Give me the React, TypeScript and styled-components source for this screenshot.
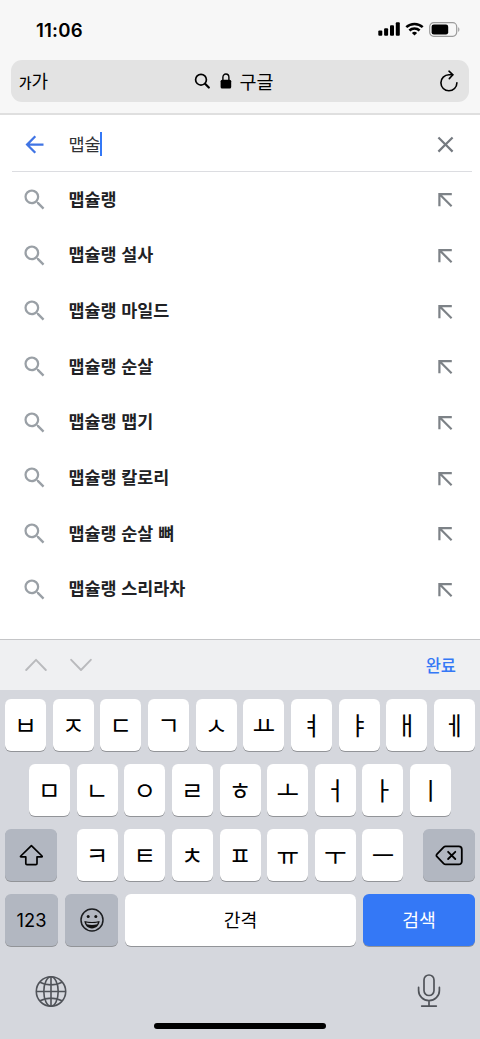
import React from 'react';
import styled, { createGlobalStyle } from 'styled-components';

const GlobalStyle = createGlobalStyle`
  * { box-sizing: border-box; }
  body { margin: 0; background: #fff; }
`;

const Screen = styled.div`
  width: 480px;
  height: 1039px;
  display: flex;
  flex-direction: column;
  overflow: hidden;
  background: #fff;
  color: #000;
  font-family: Inter, 'Noto Sans CJK KR', sans-serif;
  svg { display: block; flex: none; }
`;

const BrowserTop = styled.header`
  height: 115px;
  flex: none;
  background: #f7f7f7;
  border-bottom: 2px solid #dfdfdf;
  padding: 0 11px;
`;

const StatusBar = styled.div`
  height: 60px;
  padding: 0 8px 2px 25px;
  display: flex;
  align-items: center;
  justify-content: space-between;
`;

const Clock = styled.span`
  padding-top: 2px;
  font-size: 18.6px;
  font-weight: 600;
  letter-spacing: 0.2px;
  line-height: 20px;
`;

const StatusIcons = styled.div`
  display: flex;
  align-items: center;
  gap: 5px;
`;

const AddressBar = styled.div`
  height: 42px;
  border-radius: 11px;
  background: #e3e3e3;
  display: grid;
  grid-template-columns: 1fr auto 1fr;
  align-items: center;
  padding: 0 10px 0 8px;
  font-family: 'Noto Sans CJK KR', sans-serif;
`;

const TextSize = styled.div`
  display: flex;
  align-items: baseline;
  line-height: 24px;
  font-size: 18px;
`;

const SmallGlyph = styled.span`
  font-size: 13.5px;
  font-weight: 500;
`;

const Site = styled.div`
  display: flex;
  align-items: center;
  gap: 10px;
  padding-right: 10px;
  font-size: 18.5px;
  line-height: 24px;
`;

const SiteName = styled.span`
  margin-left: -3px;
`;

const Reload = styled.div`
  justify-self: end;
`;

const Panel = styled.main`
  height: 524px;
  flex: none;
  font-family: 'Noto Sans CJK KR', sans-serif;
`;

const SearchField = styled.div`
  height: 57px;
  margin: 0 8px 0 12px;
  padding: 3px 13.5px 0 8.5px;
  display: flex;
  align-items: center;
  border-bottom: 1px solid #dcdde1;
`;

const Query = styled.div`
  flex: 1;
  display: flex;
  align-items: center;
  margin-left: 21px;
  padding-bottom: 1px;
  color: #303134;
  font-size: 17.5px;
  line-height: 24px;
`;

const Caret = styled.span`
  width: 2px;
  height: 24px;
  margin-left: -1px;
  background: #3478f6;
`;

const SuggestionRow = styled.div`
  height: 55.65px;
  padding: 0 21px;
  display: flex;
  align-items: center;
`;

const SuggestionText = styled.span`
  flex: 1;
  margin-left: 20px;
  padding-bottom: 2px;
  font-size: 17.4px;
  font-weight: 700;
  line-height: 24px;
  word-spacing: 1px;
  color: #202124;
`;

const FormBar = styled.div`
  height: 51px;
  flex: none;
  border-top: 1px solid #c4c5c7;
  background: #eff0f2;
  padding: 0 24px 0 25px;
  display: flex;
  align-items: center;
  gap: 22.5px;
`;

const Done = styled.span`
  margin-left: auto;
  color: #3478f6;
  font-family: 'Noto Sans CJK KR', sans-serif;
  font-size: 16.5px;
  font-weight: 500;
  line-height: 24px;
`;

const Keyboard = styled.section`
  flex: 1;
  background: #d5d7dd;
  padding: 9px 5px 0;
  display: flex;
  flex-direction: column;
`;

const KeyRow = styled.div`
  height: 53px;
  margin-bottom: 12px;
  display: flex;
  justify-content: space-between;
`;

const LetterGroup = styled.div`
  display: flex;
  flex: 1;
  justify-content: center;
  gap: 6.67px;
`;

const Key = styled.div<{ $w?: number; $tone?: 'light' | 'dark' | 'blue' }>`
  width: ${p => p.$w ?? 41}px;
  height: 52px;
  flex: none;
  border-radius: 6px;
  display: flex;
  align-items: center;
  justify-content: center;
  background: ${p => (p.$tone === 'dark' ? '#b2b7c1' : p.$tone === 'blue' ? '#3478f6' : '#fff')};
  color: ${p => (p.$tone === 'blue' ? '#fff' : '#000')};
  box-shadow: 0 1px 0 #929498;
`;

const Jamo = styled.span`
  padding-bottom: 1px;
  font-family: 'Noto Sans CJK KR', sans-serif;
  font-size: 24.5px;
  line-height: 28px;
`;

const KeyLabel = styled.span`
  padding-bottom: 2px;
  font-family: 'Noto Sans CJK KR', sans-serif;
  font-size: 18.3px;
  line-height: 24px;
`;

const NumberLabel = styled.span`
  font-size: 18.3px;
  line-height: 24px;
`;

const Dock = styled.div`
  height: 64px;
  padding: 0 34px 0 30px;
  display: flex;
  align-items: center;
  justify-content: space-between;
`;

const HomeIndicator = styled.div`
  width: 172px;
  height: 6px;
  border-radius: 3px;
  background: #000;
  align-self: center;
`;

const suggestions = [
  '맵슐랭',
  '맵슐랭 설사',
  '맵슐랭 마일드',
  '맵슐랭 순살',
  '맵슐랭 맵기',
  '맵슐랭 칼로리',
  '맵슐랭 순살 뼈',
  '맵슐랭 스리라차',
];

const SignalIcon = () => (
  <svg width="22" height="14" viewBox="0 0 22 14">
    <rect x="0.3" y="8.5" width="4" height="5.2" rx="1" />
    <rect x="6.1" y="6.2" width="4" height="7.5" rx="1" />
    <rect x="12" y="3.2" width="4" height="10.5" rx="1" />
    <rect x="17.8" y="0.2" width="4" height="13.5" rx="1" />
  </svg>
);

const WifiIcon = () => (
  <svg width="19" height="14" viewBox="0 0 19 14" fill="none" stroke="#000" strokeWidth="2.5">
    <path d="M1.3 5.2a11.8 11.8 0 0 1 16.4 0" />
    <path d="M4.4 8.5a7.3 7.3 0 0 1 10.2 0" />
    <path d="M9.5 13.6L6.9 11a3.7 3.7 0 0 1 5.2 0z" fill="#000" stroke="none" />
  </svg>
);

const BatteryIcon = () => (
  <svg width="32" height="15" viewBox="0 0 32 15">
    <rect x="0.7" y="0.7" width="27" height="13.6" rx="4" fill="none" stroke="#9b9b9b" strokeWidth="1.2" />
    <rect x="2.6" y="2.5" width="16.6" height="10" rx="2.2" />
    <path d="M29.2 5.2c1.6.6 1.6 4 0 4.6z" fill="#9b9b9b" />
  </svg>
);

const BarSearchIcon = () => (
  <svg width="16" height="16" viewBox="0 0 16 16" fill="none" stroke="#000" strokeLinecap="round">
    <circle cx="7" cy="6.7" r="5.4" strokeWidth="1.7" />
    <path d="M11.1 10.8l3.7 3.7" strokeWidth="2.2" />
  </svg>
);

const LockIcon = () => (
  <svg width="12" height="16" viewBox="0 0 12 16">
    <rect x="0.6" y="6.8" width="10.6" height="8.8" rx="1.5" />
    <path d="M2.9 7.5V4.3a3 3.3 0 0 1 6 0v3.2" fill="none" stroke="#000" strokeWidth="1.4" />
  </svg>
);

const ReloadIcon = () => (
  <svg width="20" height="22" viewBox="0 0 20 22" fill="none" stroke="#000" strokeWidth="1.6" strokeLinecap="round" strokeLinejoin="round">
    <path d="M17.9 12.8a8 8 0 1 1-8-8h3.8" />
    <path d="M10 1.2l3.9 3.6-3.6 3.8" />
  </svg>
);

const BackIcon = () => (
  <svg width="27" height="27" viewBox="0 0 24 24" fill="#4074e4">
    <path d="M20 11H7.83l5.59-5.59L12 4l-8 8 8 8 1.41-1.41L7.83 13H20v-2z" />
  </svg>
);

const ClearIcon = () => (
  <svg width="27" height="27" viewBox="0 0 24 24" fill="#757a80">
    <path d="M19 6.41L17.59 5 12 10.59 6.41 5 5 6.41 10.59 12 5 17.59 6.41 19 12 13.41 17.59 19 19 17.59 13.41 12z" />
  </svg>
);

const SuggestSearchIcon = () => (
  <svg width="27.4" height="27.4" viewBox="0 0 24 24" fill="#9aa0a6">
    <path d="M15.5 14h-.79l-.28-.27A6.471 6.471 0 0 0 16 9.5 6.5 6.5 0 1 0 9.5 16c1.61 0 3.09-.59 4.23-1.57l.27.28v.79l5 4.99L20.49 19l-4.99-5zm-6 0C7.01 14 5 11.99 5 9.5S7.01 5 9.5 5 14 7.01 14 9.5 11.99 14 9.5 14z" />
  </svg>
);

const InsertIcon = () => (
  <svg width="27" height="27" viewBox="0 0 27 27" fill="none" stroke="#7d8287" strokeWidth="2.2">
    <path d="M19.8 8.1H7.4V20.2M7.6 8.3l12 11.9" />
  </svg>
);

const ChevronIcon = ({ down = false }: { down?: boolean }) => (
  <svg width="22" height="14" viewBox="0 0 22 14" fill="none" stroke="#b9babd" strokeWidth="1.9" strokeLinecap="round" strokeLinejoin="round">
    <path d={down ? 'M1.2 1.8L11 12l9.8-10.2' : 'M1.2 12L11 1.8 20.8 12'} />
  </svg>
);

const ShiftIcon = () => (
  <svg width="24" height="22" viewBox="0 0 24 22" fill="none" stroke="#000" strokeWidth="1.7" strokeLinejoin="round">
    <path d="M12.4 1.7L1.8 12c-.5.5-.3.9.3.9h4.7v6.6c0 .8.4 1.2 1.2 1.2h8.8c.8 0 1.2-.4 1.2-1.2v-6.6h4.7c.6 0 .8-.4.3-.9z" />
  </svg>
);

const DeleteIcon = () => (
  <svg width="28" height="22" viewBox="0 0 28 22" fill="none" stroke="#000" strokeWidth="1.8" strokeLinecap="round" strokeLinejoin="round">
    <path d="M10.6 2.4h13.2a3 3 0 0 1 3 3v12a3 3 0 0 1-3 3H10.6c-.8 0-1.4-.3-1.9-.8L2 12.7c-.8-.8-.8-1.8 0-2.6l6.7-6.9c.5-.5 1.1-.8 1.9-.8z" />
    <path d="M13.1 7.8l7.2 7.2M20.3 7.8l-7.2 7.2" />
  </svg>
);

const EmojiIcon = () => (
  <svg width="24" height="24" viewBox="0 0 24 24">
    <circle cx="12" cy="12" r="11" fill="none" stroke="#1b1d20" strokeWidth="1.5" />
    <circle cx="8.2" cy="8.5" r="1.5" fill="#111" />
    <circle cx="15.8" cy="8.5" r="1.5" fill="#111" />
    <path d="M4.4 13.1c4.7 1.2 10.5 1.2 15.2 0-.4 4.6-3.6 7.3-7.6 7.3s-7.2-2.7-7.6-7.3z" fill="#111" />
    <path d="M6.1 14.4c3.9.8 7.9.8 11.8 0l-.7 1.9c-3.4.8-7 .8-10.4 0z" fill="#b2b7c1" />
  </svg>
);

const GlobeIcon = () => (
  <svg width="32" height="34" viewBox="0 -1.5 32 34" fill="none" stroke="#505359" strokeWidth="1.6">
    <circle cx="16" cy="16" r="14.7" />
    <ellipse cx="16" cy="16" rx="7.2" ry="14.7" />
    <path d="M16 1.3v29.4M1.3 16h29.4M5 6.7c6.4 3.6 15.6 3.6 22 0M5 25.3c6.4-3.6 15.6-3.6 22 0" />
  </svg>
);

const MicIcon = () => (
  <svg width="24" height="34" viewBox="0 0 24 34" fill="none" stroke="#505359" strokeWidth="1.7" strokeLinecap="round">
    <rect x="7" y="1" width="10" height="20.5" rx="5" />
    <path d="M1.6 13.4v3a10.4 10.2 0 0 0 20.8 0v-3M12 26.6v5.4M4.7 32.1h14.6" />
  </svg>
);

const Letters = ({ value }: { value: string }) => (
  <LetterGroup>
    {value.split('').map(letter => (
      <Key key={letter}>
        <Jamo>{letter}</Jamo>
      </Key>
    ))}
  </LetterGroup>
);

export default function App() {
  return (
    <Screen>
      <GlobalStyle />
      <BrowserTop>
        <StatusBar>
          <Clock>11:06</Clock>
          <StatusIcons>
            <SignalIcon />
            <WifiIcon />
            <BatteryIcon />
          </StatusIcons>
        </StatusBar>
        <AddressBar>
          <TextSize>
            <SmallGlyph>가</SmallGlyph>가
          </TextSize>
          <Site>
            <BarSearchIcon />
            <LockIcon />
            <SiteName>구글</SiteName>
          </Site>
          <Reload>
            <ReloadIcon />
          </Reload>
        </AddressBar>
      </BrowserTop>

      <Panel>
        <SearchField>
          <BackIcon />
          <Query>
            맵술
            <Caret />
          </Query>
          <ClearIcon />
        </SearchField>
        {suggestions.map(text => (
          <SuggestionRow key={text}>
            <SuggestSearchIcon />
            <SuggestionText>{text}</SuggestionText>
            <InsertIcon />
          </SuggestionRow>
        ))}
      </Panel>

      <FormBar>
        <ChevronIcon />
        <ChevronIcon down />
        <Done>완료</Done>
      </FormBar>

      <Keyboard>
        <KeyRow>
          <Letters value="ㅂㅈㄷㄱㅅㅛㅕㅑㅐㅔ" />
        </KeyRow>
        <KeyRow>
          <Letters value="ㅁㄴㅇㄹㅎㅗㅓㅏㅣ" />
        </KeyRow>
        <KeyRow>
          <Key $w={52} $tone="dark">
            <ShiftIcon />
          </Key>
          <Letters value="ㅋㅌㅊㅍㅠㅜㅡ" />
          <Key $w={52} $tone="dark">
            <DeleteIcon />
          </Key>
        </KeyRow>
        <KeyRow>
          <Key $w={53} $tone="dark">
            <NumberLabel>123</NumberLabel>
          </Key>
          <Key $w={53} $tone="dark">
            <EmojiIcon />
          </Key>
          <Key $w={231}>
            <KeyLabel>간격</KeyLabel>
          </Key>
          <Key $w={112} $tone="blue">
            <KeyLabel>검색</KeyLabel>
          </Key>
        </KeyRow>
        <Dock>
          <GlobeIcon />
          <MicIcon />
        </Dock>
        <HomeIndicator />
      </Keyboard>
    </Screen>
  );
}
